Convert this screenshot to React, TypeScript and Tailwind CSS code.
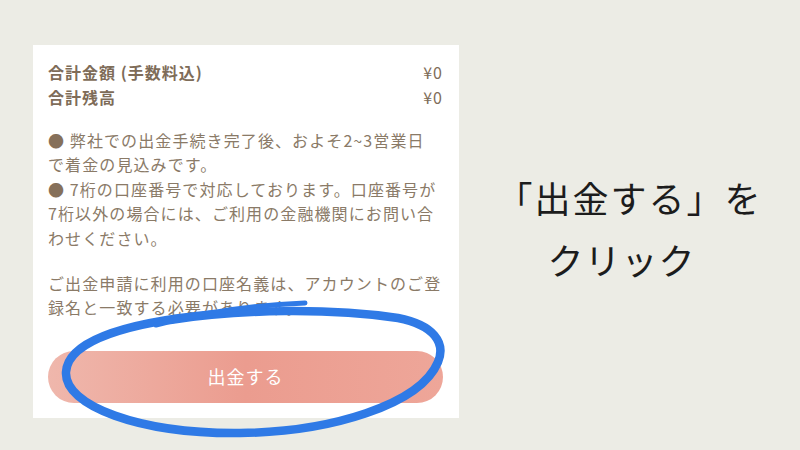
export default function App() {
    const font = { fontFamily: '"Noto Sans CJK JP", "Noto Sans", sans-serif' };

    return (
        <div className="w-[800px] h-[450px] bg-[#ecece5] flex relative overflow-hidden" style={font}>
            {/* Withdrawal panel */}
            <div className="w-[426px] mt-[45px] ml-[33px] h-[373px] bg-white pt-[15px] pl-[15px] pr-[16px] pb-[15px] flex flex-col text-[#8a7a67]">
                <div className="text-[16px] leading-[24.5px] font-bold text-[#7e6c58] tracking-[1px]">
                    <div className="flex justify-between">
                        <span>合計金額 (手数料込)</span>
                        <span className="font-normal">¥0</span>
                    </div>
                    <div className="flex justify-between">
                        <span>合計残高</span>
                        <span className="font-normal">¥0</span>
                    </div>
                </div>

                <div className="mt-[19px] text-[16px] leading-[24.4px] tracking-[1.1px] whitespace-nowrap">
                    <p>
                        <span className="text-[#86705a]">●</span> 弊社での出金手続き完了後、およそ2~3営業日
                        <br />
                        で着金の見込みです。
                        <br />
                        <span className="text-[#86705a]">●</span> 7桁の口座番号で対応しております。口座番号が
                        <br />
                        7桁以外の場合には、ご利用の金融機関にお問い合
                        <br />
                        わせください。
                    </p>
                    <p className="mt-[21px]">
                        ご出金申請に利用の口座名義は、アカウントのご登
                        <br />
                        録名と一致する必要があります。
                    </p>
                </div>

                <button className="mt-[31px] h-[54px] w-[395px] rounded-full bg-linear-to-r from-[#efb7ac] via-[#eb9c8f] to-[#eea699] text-white text-[18px] tracking-[1px]">
                    出金する
                </button>
            </div>

            {/* Caption */}
            <div className="flex-1 flex flex-col items-center pt-[166px] text-[#1c1c1c] text-[36px] leading-[62px] font-normal">
                <div className="tracking-[2px]">「出金する」を</div>
                <div className="-ml-[16px] tracking-[1px]">クリック</div>
            </div>

            {/* Hand-drawn circle over the button */}
            <svg className="absolute left-0 top-0 pointer-events-none" width="800" height="450" viewBox="0 0 800 450">
                <path
                    d="M 170 320 C 240 309, 330 308, 398 318 C 434 325, 446 343, 438 362 C 420 405, 330 432, 240 433 C 140 434, 64 406, 66 372 C 68 340, 130 322, 215 314"
                    fill="none"
                    stroke="#2f7ae6"
                    strokeWidth="8.5"
                    strokeLinecap="round"
                />
                <path
                    d="M 156 325 C 200 313, 255 305, 305 303"
                    fill="none"
                    stroke="#2f7ae6"
                    strokeWidth="5"
                    strokeLinecap="round"
                />
            </svg>
        </div>
    );
}
